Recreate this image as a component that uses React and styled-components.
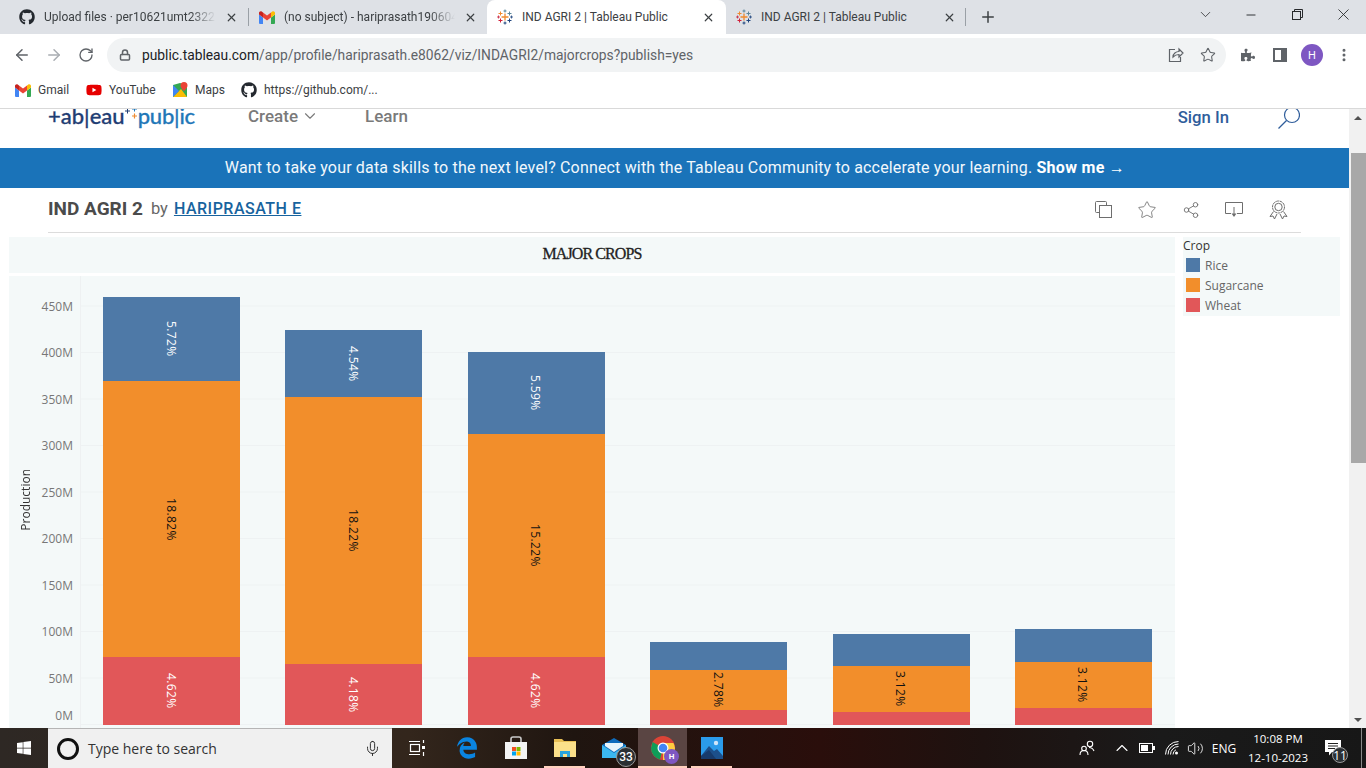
import React from "react";
import styled, { createGlobalStyle } from "styled-components";
import {
  ArrowLeft,
  ArrowRight,
  RotateCw,
  Lock,
  Star,
  X,
  Plus,
  ChevronDown,
  ChevronUp,
  Minus,
  Share2,
  Mic,
  EllipsisVertical,
  Volume2,
} from "lucide-react";
import { FaGithub, FaYoutube, FaWindows, FaEdgeLegacy, FaPuzzlePiece } from "react-icons/fa";

const GlobalStyle = createGlobalStyle`
  html, body {
    margin: 0;
    padding: 0;
    width: 1366px;
    height: 768px;
    overflow: hidden;
    background: #ffffff;
    font-family: "Roboto", "Liberation Sans", sans-serif;
  }
  * { box-sizing: border-box; }
`;

const Screen = styled.div`
  width: 1366px;
  height: 768px;
  display: flex;
  flex-direction: column;
  overflow: hidden;
`;

/* browser chrome */
const TabStrip = styled.div`
  height: 34px;
  background: #dee1e6;
  display: flex;
  align-items: stretch;
  flex-shrink: 0;
`;

const Tab = styled.div`
  width: ${(p) => p.$w}px;
  margin-left: ${(p) => p.$ml || 0}px;
  padding: 0 ${(p) => p.$pr}px 0 ${(p) => p.$pl}px;
  display: flex;
  align-items: center;
  gap: 9px;
  font-size: 12px;
  color: #3c4043;
  background: ${(p) => (p.$active ? "#ffffff" : "transparent")};
  border-radius: 8px 8px 0 0;
  flex-shrink: 0;
`;

const TabTitle = styled.span`
  flex: 1;
  white-space: nowrap;
  overflow: hidden;
  -webkit-mask-image: ${(p) => (p.$fade ? "linear-gradient(to right, #000 85%, transparent)" : "none")};
`;

const TabDivider = styled.div`
  width: 1px;
  height: 18px;
  margin: 8px 0 0 ${(p) => p.$ml || 0}px;
  background: #9aa0a6;
  flex-shrink: 0;
`;

const NewTab = styled.div`
  width: 44px;
  display: flex;
  align-items: center;
  justify-content: center;
  color: #3c4043;
`;

const WindowControls = styled.div`
  margin-left: auto;
  display: flex;
  align-items: flex-start;
  color: #26282b;
`;

const WinButton = styled.div`
  width: 46px;
  height: 29px;
  display: flex;
  align-items: center;
  justify-content: center;
`;

const Toolbar = styled.div`
  height: 40px;
  display: flex;
  align-items: center;
  background: #ffffff;
  padding: 2px 0 0 6px;
  flex-shrink: 0;
`;

const NavButton = styled.div`
  width: 32px;
  height: 32px;
  display: flex;
  align-items: center;
  justify-content: center;
  color: ${(p) => (p.$off ? "#a9adb2" : "#5f6368")};
`;

const UrlPill = styled.div`
  width: 1119px;
  height: 34px;
  margin-left: 5px;
  border-radius: 17px;
  background: #f1f3f4;
  display: flex;
  align-items: center;
  padding: 0 2px 0 12px;
  color: #5f6368;
`;

const UrlText = styled.div`
  margin-left: 11px;
  font-size: 13.8px;
  color: #5f6368;
  flex: 1;
  b {
    font-weight: 400;
    color: #202124;
  }
`;

const PillIcon = styled.div`
  width: 32px;
  display: flex;
  justify-content: center;
  color: #5f6368;
`;

const ToolIcon = styled.div`
  width: 32px;
  display: flex;
  justify-content: center;
  align-items: center;
  color: #5f6368;
  margin-left: ${(p) => p.$ml || 0}px;
`;

const Avatar = styled.div`
  width: 22px;
  height: 22px;
  border-radius: 50%;
  background: #7e57c2;
  color: #fff;
  font-size: 11px;
  display: flex;
  align-items: center;
  justify-content: center;
`;

const Bookmarks = styled.div`
  height: 35px;
  display: flex;
  align-items: center;
  padding: 0 0 2px 15px;
  background: #ffffff;
  border-bottom: 1px solid #d9d9d9;
  flex-shrink: 0;
`;

const Bookmark = styled.div`
  width: ${(p) => p.$w}px;
  display: flex;
  align-items: center;
  gap: 7px;
  font-size: 12px;
  color: #3c4043;
  white-space: nowrap;
`;

/* page */
const Viewport = styled.div`
  flex: 1;
  min-height: 0;
  display: flex;
`;

const Page = styled.div`
  width: 1349px;
  overflow: hidden;
  background: #ffffff;
`;

const Nav = styled.div`
  height: 39px;
  display: flex;
  align-items: flex-start;
  padding-left: 48px;
`;

const Logo = styled.div`
  width: 200px;
  display: flex;
  align-items: center;
  font-family: "Lato", sans-serif;
  font-size: 22px;
  font-weight: 500;
  line-height: 15px;
  height: 15px;
  margin-top: -1px;
  color: #1f3d73;
  -webkit-text-stroke: 0.3px currentColor;
  flex-shrink: 0;
`;

const LogoBlue = styled.span`
  color: #1f77b8;
  letter-spacing: -0.2px;
`;

const NavItem = styled.div`
  width: ${(p) => p.$w}px;
  margin-top: -2px;
  height: 18px;
  line-height: 18px;
  display: flex;
  align-items: center;
  gap: 3px;
  font-size: 17px;
  font-weight: 500;
  color: #7a7a7a;
`;

const SignIn = styled.div`
  margin-left: auto;
  font-size: 16.7px;
  font-weight: 500;
  line-height: 18px;
  color: #2f5d9b;
`;

const SearchWrap = styled.div`
  width: 22px;
  height: 22px;
  margin: -2px 49px 0 49px;
  color: #2f5d9b;
`;

const Banner = styled.div`
  height: 40px;
  background: #1a73b9;
  color: #f2f8fc;
  display: flex;
  align-items: center;
  justify-content: center;
  font-size: 16px;
  letter-spacing: 0.17px;
  padding: 0 0 2px 1px;
  white-space: pre;
  b {
    font-weight: 700;
    color: #fff;
    letter-spacing: 0.3px;
  }
`;

const TitleBar = styled.div`
  height: 45px;
  margin: 0 48px;
  padding-bottom: 4px;
  border-bottom: 1px solid #dcdcdc;
  display: flex;
  align-items: center;
`;

const VizName = styled.span`
  font-size: 19px;
  font-weight: 700;
  color: #4b4b4b;
`;

const ByText = styled.span`
  font-size: 16.5px;
  color: #666;
  margin: 0 6px 0 8px;
`;

const Author = styled.a`
  font-size: 16px;
  font-weight: 500;
  color: #17639e;
  text-decoration: underline;
  letter-spacing: 0.5px;
`;

const VizActions = styled.div`
  margin: 3px 1px 0 auto;
  display: flex;
  align-items: center;
  color: #6e6e6e;
`;

const VizAction = styled.div`
  width: 43.7px;
  display: flex;
  justify-content: center;
`;

const Dashboard = styled.div`
  display: flex;
  align-items: flex-start;
  padding: 4px 0 0 9px;
`;

const ChartColumn = styled.div`
  width: 1166px;
  display: flex;
  flex-direction: column;
  gap: 3px;
`;

const ChartTitle = styled.div`
  height: 36px;
  padding-bottom: 2px;
  background: #f4f9f9;
  display: flex;
  align-items: center;
  justify-content: center;
  font-family: "Liberation Serif", serif;
  font-size: 16px;
  -webkit-text-stroke: 0.3px #222;
  letter-spacing: -0.9px;
  color: #222;
`;

const ChartBody = styled.div`
  height: 452px;
  display: flex;
  background: #f4f9f9;
  font-family: "Open Sans", sans-serif;
`;

const AxisTitle = styled.div`
  width: 32px;
  display: flex;
  align-items: center;
  justify-content: center;
  span {
    writing-mode: vertical-rl;
    transform: rotate(180deg);
    font-size: 12px;
    margin-top: -4px;
    color: #333;
  }
`;

const Ticks = styled.div`
  width: 40px;
  padding: 7px 7px 0 0;
  display: flex;
  flex-direction: column;
  align-items: flex-end;
  border-right: 1px solid #eef1f2;
`;

const Tick = styled.div`
  height: 46.5px;
  flex-shrink: 0;
  display: flex;
  align-items: center;
  font-size: 12px;
  color: #777;
  transform: translateY(${(p) => p.$shift || 0}px);
`;

const Plot = styled.div`
  flex: 1;
  display: flex;
  align-items: flex-end;
  gap: 45.4px;
  padding: 0 0 3px 22px;
  background-image: linear-gradient(to bottom, transparent 45.5px, #eef2f3 45.5px);
  background-size: 100% 46.5px;
  background-position: 0 -16px;
`;

const Bar = styled.div`
  width: 137px;
  flex-shrink: 0;
  display: flex;
  flex-direction: column;
`;

const Segment = styled.div`
  height: ${(p) => p.$h}px;
  background: ${(p) => p.$color};
  color: ${(p) => p.$ink};
  display: flex;
  align-items: center;
  justify-content: center;
  span {
    writing-mode: vertical-rl;
    font-size: 12px;
    letter-spacing: 0.4px;
    margin-left: -1px;
  }
`;

const Legend = styled.div`
  width: 157px;
  height: 79px;
  margin-left: 8px;
  background: #f4f9f9;
  font-family: "Open Sans", sans-serif;
  font-size: 12px;
`;

const LegendTitle = styled.div`
  height: 18px;
  line-height: 17px;
  color: #333;
`;

const LegendRow = styled.div`
  height: 20px;
  display: flex;
  align-items: center;
  gap: 5px;
  padding-left: 3px;
  color: #666;
`;

const Swatch = styled.div`
  width: 14px;
  height: 14px;
  background: ${(p) => p.$color};
`;

const Scrollbar = styled.div`
  width: 17px;
  background: #f1f1f1;
  display: flex;
  flex-direction: column;
  align-items: center;
  justify-content: space-between;
  padding: 7px 0 6px;
  position: relative;
`;

const Arrow = styled.div`
  width: 0;
  height: 0;
  border-left: 4px solid transparent;
  border-right: 4px solid transparent;
  ${(p) => (p.$down ? "border-top: 4px solid #505050;" : "border-bottom: 4px solid #505050;")}
`;

const Thumb = styled.div`
  position: absolute;
  left: 2px;
  top: 44px;
  width: 15px;
  height: 310px;
  background: #a8a8a8;
`;

/* windows taskbar */
const Taskbar = styled.div`
  height: 40px;
  flex-shrink: 0;
  display: flex;
  align-items: stretch;
  color: #fff;
  background: linear-gradient(to right, #2e2824 0%, #33261c 30%, #1f1510 42%, #2a0e0b 60%, #1e1210 72%, #1a1a1a 85%, #171717 100%);
`;

const StartButton = styled.div`
  width: 48px;
  display: flex;
  align-items: center;
  justify-content: center;
`;

const SearchBox = styled.div`
  width: 344px;
  background: #f0f0f0;
  border-top: 1px solid #b5b5b5;
  display: flex;
  align-items: center;
  padding: 0 11px 0 9px;
  color: #333;
  font-size: 14px;
  font-family: "Open Sans", sans-serif;
`;

const Cortana = styled.div`
  width: 22px;
  height: 22px;
  border: 3px solid #111;
  border-radius: 50%;
  margin-right: 9px;
`;

const SearchHint = styled.span`
  flex: 1;
`;

const TaskIcon = styled.div`
  width: ${(p) => p.$w || 49}px;
  display: flex;
  align-items: center;
  justify-content: center;
  position: relative;
  background: ${(p) => (p.$active ? "#5a4543" : "transparent")};
  &::after {
    content: "";
    display: ${(p) => (p.$line ? "block" : "none")};
    position: absolute;
    bottom: 0;
    left: ${(p) => (p.$active ? 0 : "4px")};
    right: ${(p) => (p.$active ? 0 : "4px")};
    height: 2px;
    background: #ffd0bd;
  }
`;

const CountBadge = styled.div`
  position: absolute;
  right: ${(p) => p.$right}px;
  bottom: ${(p) => p.$bottom}px;
  width: ${(p) => p.$size}px;
  height: ${(p) => p.$size}px;
  border-radius: 50%;
  border: 1px solid #9a9a9a;
  background: #2b2f33;
  color: #fff;
  font-size: 12px;
  font-weight: 500;
  display: flex;
  align-items: center;
  justify-content: center;
`;

const ProfileBadge = styled(Avatar)`
  position: absolute;
  right: 8px;
  bottom: 4px;
  width: 15px;
  height: 15px;
  font-size: 8px;
  font-weight: 700;
`;

const Tray = styled.div`
  margin-left: auto;
  display: flex;
  align-items: center;
  padding-right: 4px;
  font-family: "Open Sans", sans-serif;
`;

const TrayItem = styled.div`
  width: ${(p) => p.$w}px;
  margin-left: ${(p) => p.$ml || 0}px;
  display: flex;
  align-items: center;
  justify-content: center;
  font-size: 12px;
`;

const Clock = styled.div`
  width: 80px;
  text-align: center;
  font-size: 11.5px;
  line-height: 19px;
  margin-left: 1px;
`;

const Notify = styled.div`
  width: 43px;
  height: 40px;
  padding-right: 13px;
  display: flex;
  align-items: center;
  justify-content: center;
  position: relative;
`;

const ShowDesktop = styled.div`
  width: 1px;
  height: 40px;
  background: #888;
`;

const GmailIcon = () => (
  <svg width="16" height="13" viewBox="0 0 16 13">
    <path d="M1 13V3l7 5 7-5v10h-3V6.5L8 9.5 4 6.5V13z" fill="#fff" />
    <path d="M1 13h3V6.5L0 3.6V12a1 1 0 0 0 1 1z" fill="#4285f4" />
    <path d="M12 13h3a1 1 0 0 0 1-1V3.6l-4 2.9z" fill="#34a853" />
    <path d="M12 1.5v5l4-2.9V2C16 .6 14.4-.2 13.3.6z" fill="#fbbc04" />
    <path d="M4 6.5v-5L8 4.6l4-3.1v5L8 9.5z" fill="#ea4335" />
    <path d="M0 2v1.6l4 2.9v-5L2.7.6C1.6-.2 0 .6 0 2z" fill="#c5221f" />
  </svg>
);

const TableauIcon = () => (
  <svg width="16" height="16" viewBox="0 0 16 16" fill="none" strokeWidth="1">
    <path d="M8 4.500v7M4.500 8h7" stroke="#ef8a2e" strokeWidth="1.300" />
    <path d="M8 .500v3M6.500 2h3" stroke="#5b879b" />
    <path d="M8 12.500v3M6.500 14h3" stroke="#1f457e" />
    <path d="M3.500 2.500v4M1.500 4.500h4" stroke="#ef8a2e" />
    <path d="M12.500 2.500v4M10.500 4.500h4" stroke="#5b879b" />
    <path d="M3.500 9.500v4M1.500 11.500h4" stroke="#d1203a" />
    <path d="M12.500 9.500v4M10.500 11.500h4" stroke="#1f457e" />
    <path d="M1.500 6.500v3M0 8h3" stroke="#c9243f" strokeWidth=".8" />
    <path d="M14.500 6.500v3M13 8h3" stroke="#1f457e" strokeWidth=".8" />
  </svg>
);

const MapsIcon = () => (
  <svg width="16" height="16" viewBox="0 0 16 16">
    <path d="M1 3l7-2 7 2v12H1z" fill="#34a853" />
    <path d="M1 15l8-8 6 8z" fill="#fbbc04" />
    <path d="M1 3l6 6-6 6z" fill="#4285f4" />
    <path d="M12 0a3.500 3.500 0 0 0-3.500 3.500C8.500 6 12 9 12 9s3.500-3 3.500-5.500A3.500 3.500 0 0 0 12 0z" fill="#ea4335" />
  </svg>
);

const ChromeIcon = () => (
  <svg width="24" height="24" viewBox="0 0 24 24">
    <circle cx="12" cy="12" r="12" fill="#db4437" />
    <path d="M12 12L1.600 6 0 12a12 12 0 0 0 9 11.600z" fill="#0f9d58" />
    <path d="M12 7h10.400A12 12 0 0 1 24 12a12 12 0 0 1-12 12z" fill="#ffcd40" />
    <circle cx="12" cy="12" r="5.500" fill="#fff" />
    <circle cx="12" cy="12" r="4.300" fill="#4285f4" />
  </svg>
);

const StoreIcon = () => (
  <svg width="24" height="24" viewBox="0 0 24 24">
    <path d="M7 7V3a2 2 0 0 1 2-2h6a2 2 0 0 1 2 2v4" fill="none" stroke="#c9c9c9" strokeWidth="1.600" />
    <rect x="1" y="6" width="22" height="17" fill="#f4f4f4" />
    <rect x="8" y="11" width="4" height="4" fill="#f25022" />
    <rect x="12.500" y="11" width="4" height="4" fill="#7fba00" />
    <rect x="8" y="15.500" width="4" height="4" fill="#00a4ef" />
    <rect x="12.500" y="15.500" width="4" height="4" fill="#ffb900" />
  </svg>
);

const FolderIcon = () => (
  <svg width="24" height="22" viewBox="0 0 24 22">
    <path d="M1 2h8l2 2h12v16H1z" fill="#e8bf55" />
    <rect x="1" y="5" width="22" height="15" fill="#fbe08a" />
    <path d="M7 14h10v6h-3v-3h-4v3H7z" fill="#2ba4dc" />
  </svg>
);

const MailIcon = () => (
  <svg width="24" height="22" viewBox="0 0 24 22">
    <path d="M0 8l12-7 12 7v13H0z" fill="#0f6cbd" />
    <path d="M0 8l12 8 12-8v13H0z" fill="#3bb7f0" />
    <path d="M3 6h18v3l-9 6-9-6z" fill="#e8f5fc" />
  </svg>
);

const PhotosIcon = () => (
  <svg width="22" height="22" viewBox="0 0 22 22">
    <rect width="22" height="22" fill="#2b9bea" />
    <circle cx="15" cy="6" r="2.200" fill="#cfe6fa" />
    <path d="M0 19l8-10 5 5 3-2 6 7v3H0z" fill="#1c4f8a" />
    <path d="M0 22v-3l8-6 7 9z" fill="#173a6b" />
  </svg>
);

const Magnifier = () => (
  <svg width="22" height="22" viewBox="0 0 22 22" fill="none" stroke="currentColor" strokeWidth="1.200">
    <circle cx="14" cy="8" r="7.500" />
    <path d="M8.500 13.500L.5 21.500" />
  </svg>
);

const CopyBox = () => (
  <svg width="17" height="17" viewBox="0 0 17 17" fill="none" stroke="currentColor" strokeWidth="1">
    <path d="M4.500 11.500h-3a1 1 0 0 1-1-1v-9a1 1 0 0 1 1-1h9a1 1 0 0 1 1 1v3" />
    <rect x="4.500" y="4.500" width="12" height="12" />
  </svg>
);

const DownloadBox = () => (
  <svg width="18" height="17" viewBox="0 0 18 17" fill="none" stroke="currentColor" strokeWidth="1">
    <path d="M6 12.500H.5v-11h17v11H12" />
    <path d="M9 6v9" />
    <path d="M6.500 12.500L9 16l2.500-3.500z" fill="currentColor" stroke="none" />
  </svg>
);

const Rosette = () => (
  <svg width="19" height="20" viewBox="0 0 19 20" fill="none" stroke="currentColor" strokeWidth="1">
    <circle cx="9.500" cy="7" r="6" strokeDasharray="3 .6" />
    <circle cx="9.500" cy="7" r="3.700" />
    <path d="M4.500 11.500L1 16.500l3-.5 1.500 3L8 14M14.500 11.500l3.500 5-3-.5-1.500 3L11 14" />
  </svg>
);

const Battery = () => (
  <svg width="16" height="10" viewBox="0 0 16 10" fill="none">
    <rect x=".5" y=".5" width="13" height="9" stroke="#fff" />
    <rect x="2" y="2" width="7" height="6" fill="#fff" />
    <rect x="14" y="3" width="2" height="4" fill="#fff" />
  </svg>
);

const WifiArcs = () => (
  <svg width="14" height="14" viewBox="0 0 14 14" fill="none" stroke="#fff" strokeWidth="1">
    <path d="M.5 13.500A13 13 0 0 1 13.500 .5M3 13.500A10.500 10.500 0 0 1 13.500 3M5.500 13.500a8 8 0 0 1 8-8M8 13.500a5.500 5.500 0 0 1 3-4.800" />
    <circle cx="11.500" cy="12" r="1.500" fill="#fff" stroke="none" />
  </svg>
);

const People = () => (
  <svg width="16" height="16" viewBox="0 0 16 16" fill="none" stroke="#fff" strokeWidth="1.100">
    <circle cx="11" cy="4" r="2.700" />
    <circle cx="5" cy="8.500" r="2.300" />
    <path d="M1 15c0-3 2-4.500 4-4.500s4 1.500 4 4.500M10 7.500c2 0 4 1 5 3.500" />
  </svg>
);

const TaskView = () => (
  <svg width="16" height="16" viewBox="0 0 16 16" fill="none" stroke="#fff" strokeWidth="1.200">
    <path d="M0 1.500h11M0 14.500h11" />
    <rect x="1.500" y="4.500" width="9" height="7" />
    <rect x="13" y="6" width="3" height="3" fill="#fff" stroke="none" />
    <path d="M14.500 0v3M14.500 12v4" />
  </svg>
);

const Bubble = () => (
  <svg width="16" height="16" viewBox="0 0 16 16">
    <path d="M0 0h16v12H7l-3 3.500V12H0z" fill="#fff" />
    <path d="M3 3.500h10M3 6h10M3 8.500h7" stroke="#222" strokeWidth="1" />
  </svg>
);

const ShareOut = () => (
  <svg width="16" height="16" viewBox="0 0 16 16" fill="none" stroke="currentColor" strokeWidth="1.200">
    <path d="M7 2.500H1.500v12h11V10" />
    <path d="M5 10c0-3.500 3-5.500 6-5.500V2l4 4-4 4V7.500c-2.500 0-4.500 1-6 2.500z" />
  </svg>
);

const SidePanel = () => (
  <svg width="14" height="14" viewBox="0 0 14 14">
    <path d="M0 0h14v14H0zM2 2v10h6V2z" fill="#5f6368" fillRule="evenodd" />
  </svg>
);

const RestoreIcon = () => (
  <svg width="11" height="11" viewBox="0 0 11 11" fill="none" stroke="#26282b">
    <rect x=".5" y="2.500" width="8" height="8" />
    <path d="M2.500 2.500v-2h8v8h-2" />
  </svg>
);

const LogoMark = () => (
  <svg width="13" height="15" viewBox="0 0 13 15" style={{ marginTop: -5 }}>
    <path d="M0 5h5M2.500 2.500v5" stroke="#1f3d73" strokeWidth="1" />
    <path d="M7 3h5M9.500 .5v5" stroke="#1f77b8" strokeWidth="1" />
    <path d="M7 10h5M9.500 7.500v5" stroke="#ef8a2e" strokeWidth="1.200" />
  </svg>
);

const BLUE = "#4e79a7";
const ORANGE = "#f28e2b";
const RED = "#e15759";

const TICKS = ["450M", "400M", "350M", "300M", "250M", "200M", "150M", "100M", "50M", "0M"];

const BARS = [
  { rice: 84, cane: 276, wheat: 68, labels: ["5.72%", "18.82%", "4.62%"] },
  { rice: 67, cane: 267, wheat: 61, labels: ["4.54%", "18.22%", "4.18%"] },
  { rice: 82, cane: 223, wheat: 68, labels: ["5.59%", "15.22%", "4.62%"] },
  { rice: 28, cane: 40, wheat: 15, labels: ["", "2.78%", ""] },
  { rice: 32, cane: 46, wheat: 13, labels: ["", "3.12%", ""] },
  { rice: 33, cane: 46, wheat: 17, labels: ["", "3.12%", ""] },
];

export default function App() {
  return (
    <Screen>
      <GlobalStyle />
      <TabStrip>
        <Tab $w={243} $pl={19} $pr={5}>
          <FaGithub size={16} color="#24292f" />
          <TabTitle $fade>Upload files · per10621umt2322</TabTitle>
          <X size={13} strokeWidth={2.2} color="#3c4043" />
        </Tab>
        <TabDivider $ml={5} />
        <Tab $w={229} $pl={10} $pr={1}>
          <GmailIcon />
          <TabTitle $fade>(no subject) - hariprasath190604</TabTitle>
          <X size={13} strokeWidth={2.2} color="#3c4043" />
        </Tab>
        <Tab $w={239} $ml={9} $active $pl={10} $pr={11}>
          <TableauIcon />
          <TabTitle>IND AGRI 2 | Tableau Public</TabTitle>
          <X size={13} strokeWidth={2.2} color="#3c4043" />
        </Tab>
        <Tab $w={239} $pl={10} $pr={9}>
          <TableauIcon />
          <TabTitle>IND AGRI 2 | Tableau Public</TabTitle>
          <X size={13} strokeWidth={2.2} color="#3c4043" />
        </Tab>
        <TabDivider />
        <NewTab>
          <Plus size={18} strokeWidth={2} />
        </NewTab>
        <WindowControls>
          <WinButton>
            <ChevronDown size={17} strokeWidth={1.1} />
          </WinButton>
          <WinButton>
            <Minus size={14} strokeWidth={1.6} />
          </WinButton>
          <WinButton>
            <RestoreIcon />
          </WinButton>
          <WinButton>
            <X size={19} strokeWidth={1.1} />
          </WinButton>
        </WindowControls>
      </TabStrip>

      <Toolbar>
        <NavButton>
          <ArrowLeft size={18} strokeWidth={2} />
        </NavButton>
        <NavButton $off>
          <ArrowRight size={18} strokeWidth={2} />
        </NavButton>
        <NavButton>
          <RotateCw size={16} strokeWidth={2} />
        </NavButton>
        <UrlPill>
          <Lock size={12} strokeWidth={3} />
          <UrlText>
            <b>public.tableau.com</b>/app/profile/hariprasath.e8062/viz/INDAGRI2/majorcrops?publish=yes
          </UrlText>
          <PillIcon>
            <ShareOut />
          </PillIcon>
          <PillIcon>
            <Star size={16} strokeWidth={1.6} />
          </PillIcon>
        </UrlPill>
        <ToolIcon $ml={6}>
          <FaPuzzlePiece size={14} />
        </ToolIcon>
        <ToolIcon>
          <SidePanel />
        </ToolIcon>
        <ToolIcon>
          <Avatar>H</Avatar>
        </ToolIcon>
        <ToolIcon>
          <EllipsisVertical size={16} strokeWidth={2.5} />
        </ToolIcon>
      </Toolbar>

      <Bookmarks>
        <Bookmark $w={71}>
          <GmailIcon />
          Gmail
        </Bookmark>
        <Bookmark $w={86}>
          <FaYoutube size={16} color="#e60000" />
          YouTube
        </Bookmark>
        <Bookmark $w={69}>
          <MapsIcon />
          Maps
        </Bookmark>
        <Bookmark $w={160}>
          <FaGithub size={16} color="#24292f" />
          https://github.com/...
        </Bookmark>
      </Bookmarks>

      <Viewport>
        <Page>
          <Nav>
            <Logo>
              +ab|eau
              <LogoMark />
              <LogoBlue>pub|ic</LogoBlue>
            </Logo>
            <NavItem $w={117}>
              Create <ChevronDown size={18} strokeWidth={1.5} />
            </NavItem>
            <NavItem $w={60}>Learn</NavItem>
            <SignIn>Sign In</SignIn>
            <SearchWrap>
              <Magnifier />
            </SearchWrap>
          </Nav>

          <Banner>
            {"Want to take your data skills to the next level? Connect with the Tableau Community to accelerate your learning. "}
            <b>Show me →</b>
          </Banner>

          <TitleBar>
            <VizName>IND AGRI 2</VizName>
            <ByText>by</ByText>
            <Author>HARIPRASATH E</Author>
            <VizActions>
              <VizAction>
                <CopyBox />
              </VizAction>
              <VizAction>
                <Star size={20} strokeWidth={1} />
              </VizAction>
              <VizAction>
                <Share2 size={18} strokeWidth={1.2} />
              </VizAction>
              <VizAction>
                <DownloadBox />
              </VizAction>
              <VizAction>
                <Rosette />
              </VizAction>
            </VizActions>
          </TitleBar>

          <Dashboard>
            <ChartColumn>
              <ChartTitle>MAJOR CROPS</ChartTitle>
              <ChartBody>
                <AxisTitle>
                  <span>Production</span>
                </AxisTitle>
                <Ticks>
                  {TICKS.map((t) => (
                    <Tick key={t} $shift={t === "0M" ? -9 : 0}>
                      {t}
                    </Tick>
                  ))}
                </Ticks>
                <Plot>
                  {BARS.map((b, i) => (
                    <Bar key={i}>
                      <Segment $h={b.rice} $color={BLUE} $ink="#fff">
                        <span>{b.labels[0]}</span>
                      </Segment>
                      <Segment $h={b.cane} $color={ORANGE} $ink="#111">
                        <span>{b.labels[1]}</span>
                      </Segment>
                      <Segment $h={b.wheat} $color={RED} $ink="#fff">
                        <span>{b.labels[2]}</span>
                      </Segment>
                    </Bar>
                  ))}
                </Plot>
              </ChartBody>
            </ChartColumn>
            <Legend>
              <LegendTitle>Crop</LegendTitle>
              <LegendRow>
                <Swatch $color={BLUE} />
                Rice
              </LegendRow>
              <LegendRow>
                <Swatch $color={ORANGE} />
                Sugarcane
              </LegendRow>
              <LegendRow>
                <Swatch $color={RED} />
                Wheat
              </LegendRow>
            </Legend>
          </Dashboard>
        </Page>
        <Scrollbar>
          <Arrow />
          <Thumb />
          <Arrow $down />
        </Scrollbar>
      </Viewport>

      <Taskbar>
        <StartButton>
          <FaWindows size={16} />
        </StartButton>
        <SearchBox>
          <Cortana />
          <SearchHint>Type here to search</SearchHint>
          <Mic size={17} strokeWidth={1.3} color="#222" />
        </SearchBox>
        <TaskIcon $w={50}>
          <TaskView />
        </TaskIcon>
        <TaskIcon>
          <FaEdgeLegacy size={22} color="#0a84e0" />
        </TaskIcon>
        <TaskIcon>
          <StoreIcon />
        </TaskIcon>
        <TaskIcon $line>
          <FolderIcon />
        </TaskIcon>
        <TaskIcon>
          <MailIcon />
          <CountBadge $right={2} $bottom={1} $size={20}>
            33
          </CountBadge>
        </TaskIcon>
        <TaskIcon $active $line>
          <ChromeIcon />
          <ProfileBadge>H</ProfileBadge>
        </TaskIcon>
        <TaskIcon $line>
          <PhotosIcon />
        </TaskIcon>
        <Tray>
          <TrayItem $w={36}>
            <People />
          </TrayItem>
          <TrayItem $w={24} $ml={5}>
            <ChevronUp size={20} strokeWidth={1.3} />
          </TrayItem>
          <TrayItem $w={26}>
            <Battery />
          </TrayItem>
          <TrayItem $w={24}>
            <WifiArcs />
          </TrayItem>
          <TrayItem $w={22}>
            <Volume2 size={17} strokeWidth={1.2} />
          </TrayItem>
          <TrayItem $w={26} $ml={5}>
            ENG
          </TrayItem>
          <Clock>
            10:08 PM
            <br />
            12-10-2023
          </Clock>
          <Notify>
            <Bubble />
            <CountBadge $right={13} $bottom={5} $size={16}>
              11
            </CountBadge>
          </Notify>
          <ShowDesktop />
        </Tray>
      </Taskbar>
    </Screen>
  );
}
